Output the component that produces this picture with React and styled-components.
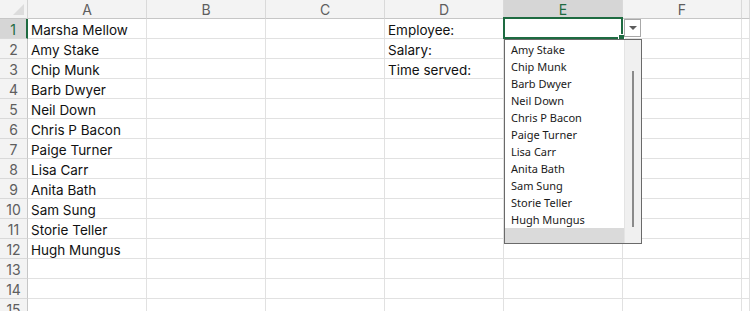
import React from "react";
import styled, { createGlobalStyle, css } from "styled-components";

const GlobalStyle = createGlobalStyle`
  body {
    margin: 0;
    background: #fff;
    overflow: hidden;
  }
`;

const Sheet = styled.div`
  display: grid;
  grid-template-columns: 28px repeat(6, 119px) 1fr;
  grid-template-rows: 19px repeat(15, 20px);
  width: 750px;
  height: 311px;
  overflow: hidden;
  font-family: Inter, "Liberation Sans", sans-serif;
`;

const Corner = styled.div`
  position: relative;
  background: #f3f3f3;
  border-right: 1px solid #d4d4d4;
  border-bottom: 1px solid #c6c6c6;
  box-sizing: border-box;

  &::after {
    content: "";
    position: absolute;
    right: 3px;
    bottom: 3px;
    border-left: 11px solid transparent;
    border-bottom: 11px solid #dcdcdc;
  }
`;

const ColHeader = styled.div`
  display: flex;
  align-items: center;
  justify-content: center;
  background: #f3f3f3;
  color: #5e5e5e;
  font-size: 14px;
  border-right: 1px solid #d9d9d9;
  border-bottom: 1px solid #c6c6c6;
  box-sizing: border-box;
  padding-top: 1px;

  ${(p) =>
    p.$active &&
    css`
      background: #d6d6d6;
      color: #1e6b41;
      border-bottom: 2px solid #1e6b41;
      padding-top: 2px;
    `}
`;

const RowHeader = styled.div`
  display: flex;
  align-items: center;
  justify-content: center;
  background: #f3f3f3;
  color: #5e5e5e;
  font-size: 14px;
  padding-top: 2px;
  border-right: 1px solid #c6c6c6;
  border-bottom: 1px solid #d9d9d9;
  box-sizing: border-box;

  ${(p) =>
    p.$active &&
    css`
      background: #d6d6d6;
      color: #1e6b41;
      border-right: 2px solid #1e6b41;
    `}
`;

const Cell = styled.div`
  position: relative;
  display: flex;
  align-items: center;
  padding: 2px 0 0 3px;
  font-size: 13.5px;
  color: #111;
  white-space: nowrap;
  border-right: 1px solid #e1e1e1;
  border-bottom: 1px solid #e1e1e1;
  box-sizing: border-box;
  ${(p) => p.$selected && "z-index: 2;"}
`;

const Selection = styled.div`
  position: absolute;
  top: -2px;
  left: -1px;
  right: -1px;
  bottom: -1px;
  border: 2px solid #1e6b41;
  pointer-events: none;

  &::after {
    content: "";
    position: absolute;
    right: -4px;
    bottom: -4px;
    width: 5px;
    height: 5px;
    background: #1e6b41;
    border: 1px solid #fff;
  }
`;

const DropButton = styled.div`
  position: absolute;
  left: 120px;
  top: 0px;
  width: 17px;
  height: 18px;
  box-sizing: border-box;
  border: 1px solid #a8a8a8;
  background: #fff;
  display: flex;
  align-items: center;
  justify-content: center;

  &::after {
    content: "";
    border-left: 4px solid transparent;
    border-right: 4px solid transparent;
    border-top: 4px solid #5c5c5c;
  }
`;

const ListBox = styled.div`
  position: absolute;
  left: 0px;
  top: 20px;
  width: 138px;
  height: 205px;
  box-sizing: border-box;
  border: 1px solid #6a6a6a;
  background: #fff;
  display: grid;
  grid-template-columns: 1fr 17px;
  font-family: "Noto Sans", "Open Sans", sans-serif;
  font-size: 11px;
  color: #1a1a1a;
`;

const ListItems = styled.div`
  display: flex;
  flex-direction: column;
  padding-top: 1px;
`;

const ListItem = styled.div`
  height: 17px;
  line-height: 17px;
  padding-left: 6px;
`;

const ListFooter = styled.div`
  margin-top: auto;
  height: 15px;
  background: #dadada;
`;

const ScrollTrack = styled.div`
  position: relative;
  background: #f0f0f0;
  border-left: 1px solid #e4e4e4;
`;

const ScrollThumb = styled.div`
  position: absolute;
  left: 7px;
  top: 31px;
  width: 2px;
  height: 156px;
  background: #8a8a8a;
`;

const columns = ["A", "B", "C", "D", "E", "F", ""];

const names = [
  "Marsha Mellow",
  "Amy Stake",
  "Chip Munk",
  "Barb Dwyer",
  "Neil Down",
  "Chris P Bacon",
  "Paige Turner",
  "Lisa Carr",
  "Anita Bath",
  "Sam Sung",
  "Storie Teller",
  "Hugh Mungus",
];

const labels = ["Employee:", "Salary:", "Time served:"];

const App = () => {
  const rows = Array.from({ length: 15 }, (_, i) => i + 1);

  return (
    <>
      <GlobalStyle />
      <Sheet>
        <Corner />
        {columns.map((c, i) => (
          <ColHeader key={i} $active={c === "E"}>
            {c}
          </ColHeader>
        ))}
        {rows.map((r) => (
          <React.Fragment key={r}>
            <RowHeader $active={r === 1}>{r}</RowHeader>
            {columns.map((c, ci) => {
              const selected = r === 1 && c === "E";
              let text = "";
              if (c === "A") text = names[r - 1] || "";
              if (c === "D") text = labels[r - 1] || "";
              return (
                <Cell key={ci} $selected={selected}>
                  {text}
                  {selected && (
                    <>
                      <Selection />
                      <DropButton />
                      <ListBox>
                        <ListItems>
                          {names.slice(1).map((n) => (
                            <ListItem key={n}>{n}</ListItem>
                          ))}
                          <ListFooter />
                        </ListItems>
                        <ScrollTrack>
                          <ScrollThumb />
                        </ScrollTrack>
                      </ListBox>
                    </>
                  )}
                </Cell>
              );
            })}
          </React.Fragment>
        ))}
      </Sheet>
    </>
  );
};

export default App;
